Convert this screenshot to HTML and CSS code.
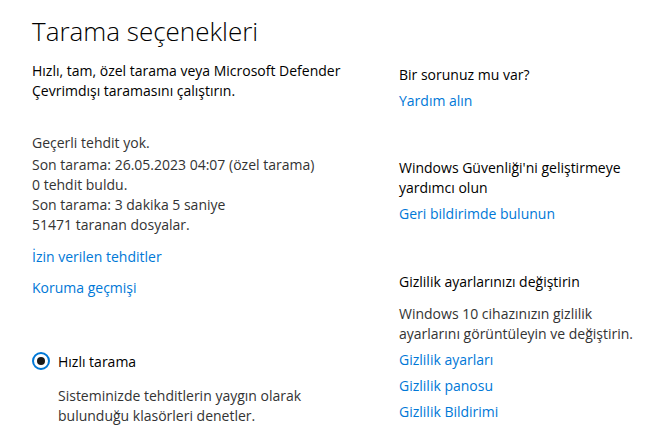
FILE: index.html
```html
<!DOCTYPE html>
<html lang="tr">
<head>
<meta charset="utf-8">
<title>Tarama seçenekleri</title>
<link rel="stylesheet" href="styles.css">
</head>
<body>
<div class="page">
  <main class="main">
    <h1 class="title">Tarama seçenekleri</h1>
    <p class="intro">Hızlı, tam, özel tarama veya Microsoft Defender<br>Çevrimdışı taramasını çalıştırın.</p>
    <div class="status">
      <p class="status-first">Geçerli tehdit yok.</p>
      <p>Son tarama: 26.05.2023 04:07 (özel tarama)<br>0 tehdit buldu.<br>Son tarama: 3 dakika 5 saniye<br>51471 taranan dosyalar.</p>
    </div>
    <div class="links">
      <a class="link" href="#">İzin verilen tehditler</a>
      <a class="link" href="#">Koruma geçmişi</a>
    </div>
    <label class="option">
      <span class="radio"><span class="radio-dot"></span></span>
      <span class="option-label">Hızlı tarama</span>
    </label>
    <p class="option-desc">Sisteminizde tehditlerin yaygın olarak<br>bulunduğu klasörleri denetler.</p>
  </main>
  <aside class="side">
    <section class="side-section first">
      <h2 class="side-heading">Bir sorunuz mu var?</h2>
      <a class="link side-link" href="#">Yardım alın</a>
    </section>
    <section class="side-section">
      <h2 class="side-heading">Windows Güvenliği'ni geliştirmeye<br>yardımcı olun</h2>
      <a class="link side-link" href="#">Geri bildirimde bulunun</a>
    </section>
    <section class="side-section">
      <h2 class="side-heading">Gizlilik ayarlarınızı değiştirin</h2>
      <p class="side-text">Windows 10 cihazınızın gizlilik<br>ayarlarını görüntüleyin ve değiştirin.</p>
      <div class="side-links">
        <a class="link" href="#">Gizlilik ayarları</a>
        <a class="link" href="#">Gizlilik panosu</a>
        <a class="link" href="#">Gizlilik Bildirimi</a>
      </div>
    </section>
  </aside>
</div>
</body>
</html>
```
FILE: styles.css
```css
html, body {
  margin: 0;
  padding: 0;
  background: #ffffff;
}
body {
  font-family: "Open Sans", "Noto Sans", "Liberation Sans", sans-serif;
  font-size: 14px;
  line-height: 20px;
  color: #000000;
}
p, h1, h2 {
  margin: 0;
  font-weight: normal;
  font-size: inherit;
}
.page {
  display: flex;
  padding-left: 32px;
}
.main {
  width: 367px;
  flex: none;
  display: flex;
  flex-direction: column;
  align-items: flex-start;
}
.title {
  margin-top: 13px;
  font-size: 26px;
  line-height: 36px;
  font-weight: 300;
  color: #000;
}
.intro {
  margin-top: 12px;
}
.status {
  margin-top: 32px;
  color: #333333;
}
.status-first {
  margin-bottom: 2px;
}
.links {
  margin-top: 12px;
  display: flex;
  flex-direction: column;
  align-items: flex-start;
  gap: 11px;
}
.link {
  color: #0078d7;
  text-decoration: none;
  line-height: 20px;
}
.option {
  margin-top: 54px;
  display: flex;
  align-items: center;
  gap: 8px;
  height: 20px;
}
.radio {
  width: 14px;
  height: 14px;
  border: 2px solid #0078d7;
  border-radius: 50%;
  display: flex;
  align-items: center;
  justify-content: center;
  margin-top: -3px;
}
.radio-dot {
  width: 8px;
  height: 8px;
  border-radius: 50%;
  background: #1a1a1a;
}
.option-desc {
  margin-top: 14px;
  padding-left: 26px;
  color: #333333;
}
.side {
  flex: 1;
  display: flex;
  flex-direction: column;
}
.side-heading {
  color: #000;
}
.side-section {
  display: flex;
  flex-direction: column;
  align-items: flex-start;
  margin-top: 47px;
}
.side-section.first {
  margin-top: 65px;
}
.side-section:last-child {
  margin-top: 48px;
}
.side-link {
  margin-top: 6px;
}
.side-text {
  margin-top: 12px;
  color: #333333;
}
.side-links {
  margin-top: 6px;
  display: flex;
  flex-direction: column;
  align-items: flex-start;
  gap: 6px;
}
```
